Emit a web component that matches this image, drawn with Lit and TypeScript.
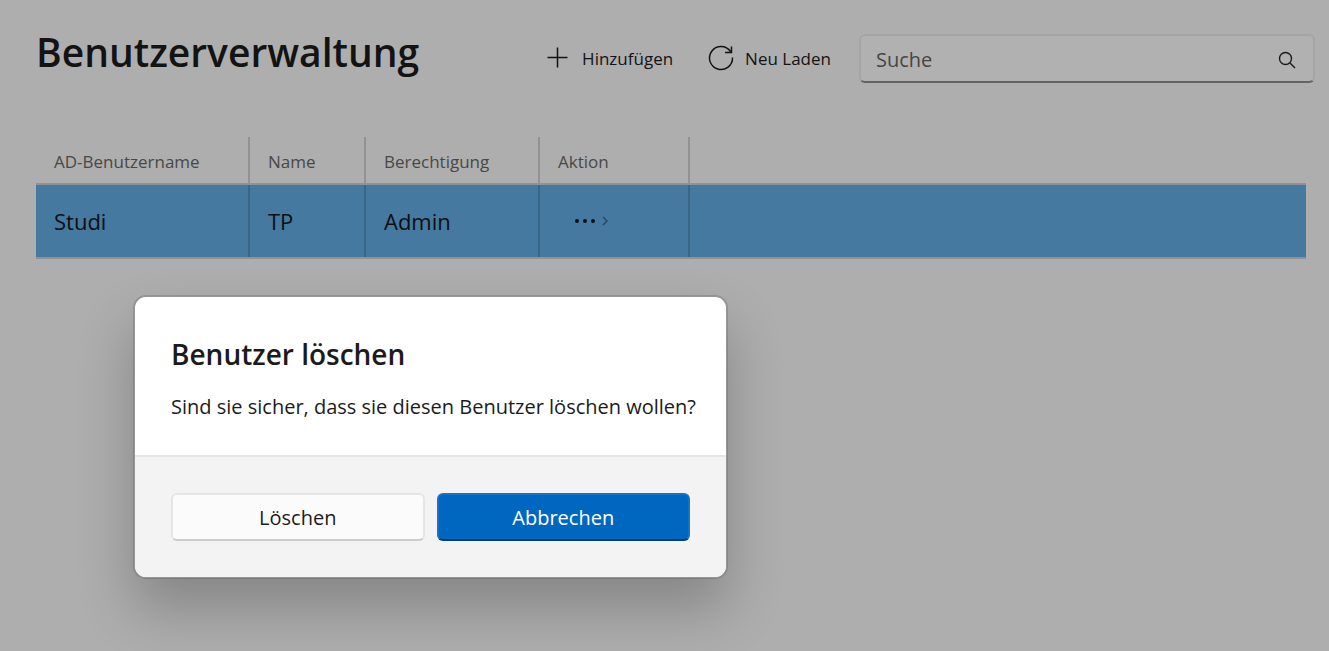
import { LitElement, html, css, svg } from "lit";
import { customElement, state } from "lit/decorators.js";

interface User {
  account: string;
  name: string;
  role: string;
}

const plusIcon = svg`<path d="M11.5 1.5v20M1.5 11.5h20" />`;
const reloadIcon = svg`<path d="M23.5 11.5A11.5 11.5 0 1 1 21.5 5.5M22.5 0.5V6.5H16" />`;

@customElement("confirm-dialog")
export class ConfirmDialog extends LitElement {
  static styles = css`
    :host {
      display: block;
    }
    .dialog {
      position: static;
      margin: 0;
      padding: 0;
      border: 2px solid rgba(0, 0, 0, 0.13);
      border-radius: 13px;
      background: #ffffff;
      background-clip: padding-box;
      color: #1b1b1b;
      width: auto;
      box-sizing: border-box;
      box-shadow: 0 30px 56px rgba(0, 0, 0, 0.23);
    }
    .content {
      padding: 34px 36px;
      border-bottom: 2px solid #e5e5e5;
    }
    .heading {
      margin: 0 0 16px;
      font-size: 28px;
      line-height: 46px;
      font-weight: 600;
    }
    .message {
      margin: 0;
      font-size: 20px;
      line-height: 28px;
      white-space: nowrap;
    }
    .actions {
      display: grid;
      grid-template-columns: 1fr 1fr;
      gap: 12px;
      padding: 36px;
      background: #f3f3f3;
      border-radius: 0 0 11px 11px;
    }
    .button {
      height: 48px;
      border: 2px solid #e5e5e5;
      border-bottom-color: #cccccc;
      border-radius: 6px;
      padding: 2px 16px 0;
      background: #fbfbfb;
      color: #1b1b1b;
      font: inherit;
      font-size: 20px;
      line-height: 28px;
    }
    .primary {
      background: #0067c0;
      border-color: #1473c5;
      border-bottom-color: #003e73;
      color: #ffffff;
    }
  `;

  render() {
    return html`
      <dialog class="dialog" open aria-labelledby="heading">
        <div class="content">
          <h2 class="heading" id="heading">Benutzer löschen</h2>
          <p class="message">Sind sie sicher, dass sie diesen Benutzer löschen wollen?</p>
        </div>
        <div class="actions">
          <button class="button" type="button">Löschen</button>
          <button class="button primary" type="button">Abbrechen</button>
        </div>
      </dialog>
    `;
  }
}

@customElement("app-root")
export class AppRoot extends LitElement {
  static styles = css`
    :host {
      display: block;
      position: relative;
      box-sizing: border-box;
      min-height: 100vh;
      overflow: hidden;
      background: #aeaeae;
      color: #131313;
      font-family: "Open Sans", "Noto Sans", sans-serif;
    }
    .header {
      display: flex;
      align-items: flex-start;
      padding: 24px 14px 0 36px;
    }
    .title {
      flex: 1;
      margin: 0;
      font-size: 39px;
      line-height: 56px;
      font-weight: 600;
    }
    .toolbar {
      display: flex;
      gap: 36px;
      padding: 10px 28px 0 0;
    }
    .command {
      display: flex;
      align-items: center;
      gap: 12px;
      height: 48px;
      padding: 0;
      border: 0;
      background: none;
      color: inherit;
      font: inherit;
      font-size: 17px;
      line-height: 24px;
    }
    .label {
      padding-top: 2px;
    }
    .icon {
      width: 24px;
      height: 24px;
      fill: none;
      stroke: currentColor;
      stroke-width: 1.5;
      overflow: visible;
    }
    .search {
      display: flex;
      align-items: center;
      box-sizing: border-box;
      width: 456px;
      height: 49px;
      margin-top: 10px;
      padding: 0 16px 0 15px;
      border: 2px solid #a5a5a5;
      border-bottom-color: #636363;
      border-radius: 6px;
      background: #b1b1b1;
    }
    .field {
      flex: 1;
      min-width: 0;
      padding: 2px 0 0;
      border: 0;
      outline: 0;
      background: none;
      color: inherit;
      font: inherit;
      font-size: 20px;
      line-height: 28px;
    }
    .field::placeholder {
      color: #454545;
      opacity: 1;
    }
    .glass {
      width: 20px;
      height: 20px;
      fill: none;
      stroke: #1b1b1b;
      stroke-width: 1.4;
    }
    .panel {
      padding: 54px 23px 0 36px;
    }
    .table {
      width: 100%;
      border-collapse: separate;
      border-spacing: 0;
      table-layout: fixed;
    }
    .w-account { width: 214px; }
    .w-name { width: 116px; }
    .w-role { width: 174px; }
    .w-action { width: 150px; }
    .cell {
      box-sizing: border-box;
      padding: 0 18px;
      text-align: left;
      border-bottom: 2px solid #929292;
      white-space: nowrap;
    }
    .head {
      height: 48px;
      padding-top: 4px;
      background: linear-gradient(#929292, #929292) right / 2px 100% no-repeat;
      color: #484848;
      font-size: 17px;
      line-height: 24px;
      font-weight: 400;
    }
    .data {
      height: 74px;
      background: linear-gradient(#3b6687, #3b6687) right / 2px 100% no-repeat #46799f;
      background-clip: padding-box;
      color: #0a0f14;
      font-size: 22px;
      line-height: 28px;
    }
    .rest {
      background-image: none;
    }
    .more {
      display: flex;
      align-items: center;
      gap: 6px;
      margin-left: 16px;
      padding: 0;
      border: 0;
      background: none;
      color: inherit;
    }
    .dots {
      width: 22px;
      height: 16px;
      fill: currentColor;
    }
    .chevron {
      width: 6px;
      height: 10px;
      fill: none;
      stroke: #27435a;
      stroke-width: 1.3;
    }
    .popup {
      position: absolute;
      top: 295px;
      left: 133px;
      width: 595px;
    }
  `;

  @state() private users: User[] = [{ account: "Studi", name: "TP", role: "Admin" }];

  render() {
    return html`
      <header class="header">
        <h1 class="title">Benutzerverwaltung</h1>
        <div class="toolbar">
          <button class="command" type="button">
            <svg class="icon" viewBox="0 0 24 24" aria-hidden="true">${plusIcon}</svg>
            <span class="label">Hinzufügen</span>
          </button>
          <button class="command" type="button">
            <svg class="icon" viewBox="0 0 24 24" aria-hidden="true">${reloadIcon}</svg>
            <span class="label">Neu Laden</span>
          </button>
        </div>
        <label class="search">
          <input class="field" type="text" placeholder="Suche" aria-label="Suche" />
          <svg class="glass" viewBox="0 0 20 20" aria-hidden="true">
            <circle cx="8.5" cy="9.5" r="6" />
            <path d="M13 14l5 5" />
          </svg>
        </label>
      </header>
      <main class="panel">
        <table class="table">
          <colgroup>
            <col class="w-account" />
            <col class="w-name" />
            <col class="w-role" />
            <col class="w-action" />
            <col />
          </colgroup>
          <thead>
            <tr>
              <th class="cell head">AD-Benutzername</th>
              <th class="cell head">Name</th>
              <th class="cell head">Berechtigung</th>
              <th class="cell head">Aktion</th>
              <td class="cell head rest"></td>
            </tr>
          </thead>
          <tbody>
            ${this.users.map(
              (user) => html`
                <tr>
                  <td class="cell data">${user.account}</td>
                  <td class="cell data">${user.name}</td>
                  <td class="cell data">${user.role}</td>
                  <td class="cell data">
                    <button class="more" type="button" aria-label="Aktionen">
                      <svg class="dots" viewBox="0 0 22 16" aria-hidden="true">
                        <circle cx="3" cy="8" r="2" />
                        <circle cx="11" cy="8" r="2" />
                        <circle cx="19" cy="8" r="2" />
                      </svg>
                      <svg class="chevron" viewBox="0 0 6 10" aria-hidden="true">
                        <path d="M1 1l4 4-4 4" />
                      </svg>
                    </button>
                  </td>
                  <td class="cell data rest"></td>
                </tr>
              `
            )}
          </tbody>
        </table>
      </main>
      <confirm-dialog class="popup"></confirm-dialog>
    `;
  }
}
